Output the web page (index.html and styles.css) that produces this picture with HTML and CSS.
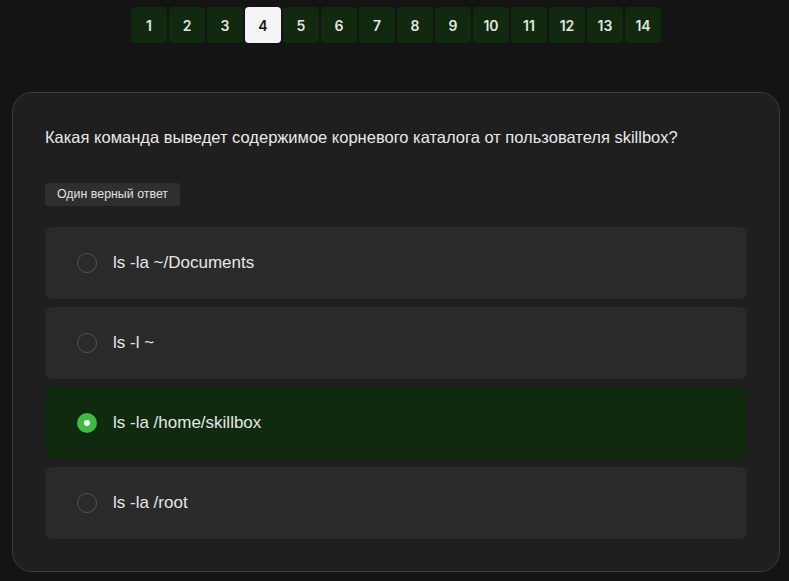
FILE: index.html
```html
<!DOCTYPE html>
<html lang="ru">
<head>
<meta charset="utf-8">
<link rel="stylesheet" href="styles.css">
</head>
<body>
<div class="page">
  <nav class="pager">
    <span class="pg">1</span><span class="pg">2</span><span class="pg">3</span><span class="pg active">4</span><span class="pg">5</span><span class="pg">6</span><span class="pg">7</span><span class="pg">8</span><span class="pg">9</span><span class="pg">10</span><span class="pg">11</span><span class="pg">12</span><span class="pg">13</span><span class="pg">14</span>
  </nav>
  <section class="card">
    <h1 class="question">Какая команда выведет содержимое корневого каталога от пользователя skillbox?</h1>
    <div class="badge">Один верный ответ</div>
    <div class="options">
      <div class="option"><span class="radio"></span><span class="label">ls -la ~/Documents</span></div>
      <div class="option"><span class="radio"></span><span class="label">ls -l ~</span></div>
      <div class="option selected"><span class="radio"></span><span class="label">ls -la /home/skillbox</span></div>
      <div class="option"><span class="radio"></span><span class="label">ls -la /root</span></div>
    </div>
  </section>
</div>
</body>
</html>
```
FILE: styles.css
```css
html, body {
  margin: 0;
  padding: 0;
  background: #141414;
}
body {
  font-family: "Liberation Sans", Arial, sans-serif;
  color: #e6e6e6;
}
.page {
  width: 768px;
  padding: 7px 0 0 12px;
}
.pager {
  display: flex;
  gap: 2px;
  margin-left: 119px;
}
.pg {
  width: 36px;
  height: 36px;
  border-radius: 4px;
  background: #10290f;
  color: #e2e6e0;
  font-family: Inter, sans-serif;
  font-weight: 600;
  font-size: 14px;
  display: flex;
  align-items: center;
  justify-content: center;
}
.pg.active {
  background: #f4f4f6;
  color: #151515;
}
.card {
  margin-top: 49px;
  box-sizing: border-box;
  width: 768px;
  height: 480px;
  background: #1f1f1f;
  border: 1px solid #3c3c3c;
  border-radius: 20px;
  padding: 34px 32px 0 32px;
}
.question {
  margin: 0;
  font-size: 16.5px;
  font-weight: normal;
  line-height: 20px;
  color: #e8e8e8;
}
.badge {
  display: inline-block;
  margin-top: 36px;
  height: 23px;
  line-height: 23px;
  padding: 0 12px;
  background: #2f2f2f;
  border-radius: 3px;
  font-size: 12.4px;
  color: #e0e0e0;
}
.options {
  margin-top: 21px;
  display: flex;
  flex-direction: column;
  gap: 8px;
}
.option {
  height: 72px;
  border-radius: 8px;
  background: #2a2a2a;
  display: flex;
  align-items: center;
  padding-left: 32px;
  gap: 16px;
}
.option.selected {
  background: #0f2a0f;
}
.radio {
  box-sizing: border-box;
  width: 20px;
  height: 20px;
  border-radius: 50%;
  border: 1.5px solid #555;
  flex: none;
}
.selected .radio {
  border: none;
  background: #3dbb47;
  display: flex;
  align-items: center;
  justify-content: center;
}
.selected .radio::after {
  content: "";
  width: 6px;
  height: 6px;
  border-radius: 50%;
  background: #fff;
}
.label {
  font-size: 17px;
  color: #e6e6e6;
}
```
